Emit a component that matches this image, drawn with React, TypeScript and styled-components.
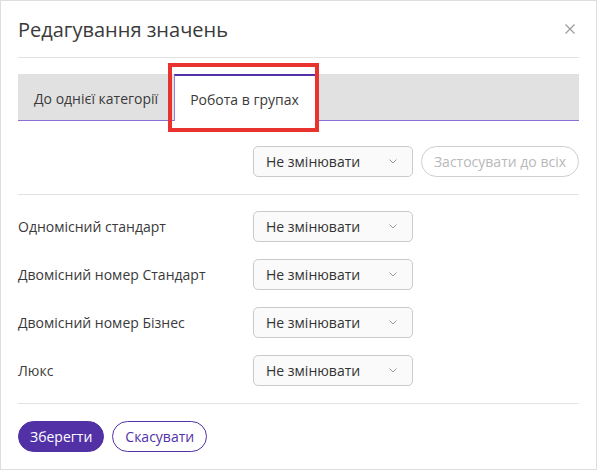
import React from 'react';
import styled, { createGlobalStyle } from 'styled-components';

const GlobalStyle = createGlobalStyle`
  html, body {
    margin: 0;
    padding: 0;
    background: #ffffff;
  }
  body {
    font-family: 'Open Sans', 'Noto Sans', sans-serif;
    color: #3a3a3a;
  }
  * {
    box-sizing: border-box;
  }
`;

const PURPLE = '#5231a7';

const Modal = styled.div`
  width: 597px;
  height: 470px;
  border: 1px solid #dedede;
  padding: 0 17px;
  display: flex;
  flex-direction: column;
  background: #fff;
`;

const Header = styled.header`
  height: 57px;
  border-bottom: 1px solid #e2e2e2;
  display: flex;
  align-items: center;
  justify-content: space-between;
`;

const Title = styled.h1`
  margin: 0;
  font-size: 20px;
  font-weight: 400;
  color: #3a3a3a;
`;

const CloseButton = styled.button`
  border: none;
  background: none;
  padding: 0;
  margin-right: 4px;
  width: 10px;
  height: 10px;
  display: flex;
  cursor: pointer;
`;

const TabBar = styled.nav`
  margin-top: 16px;
  height: 47px;
  background: #e1e1e1;
  border-bottom: 1px solid #8c6fd4;
  display: flex;
  align-items: flex-start;
`;

const Tab = styled.div<{ $active?: boolean }>`
  position: relative;
  height: 47px;
  padding: 1px 16px 0 ${(p) => (p.$active ? '15px' : '16px')};
  display: flex;
  align-items: center;
  font-size: 14px;
  color: #3a3a3a;
  white-space: nowrap;
  background: ${(p) => (p.$active ? '#ffffff' : 'transparent')};
  border-top: ${(p) => (p.$active ? `2px solid ${PURPLE}` : 'none')};
  border-left: ${(p) => (p.$active ? '1px solid #9a80da' : 'none')};
  border-right: ${(p) => (p.$active ? '1px solid #9a80da' : 'none')};
`;

const Highlight = styled.span`
  position: absolute;
  top: -13px;
  left: -7px;
  width: 151px;
  height: 69px;
  border: 4px solid #e8332e;
  pointer-events: none;
`;

const Row = styled.div<{ $gap?: number }>`
  display: grid;
  grid-template-columns: 235px 160px auto;
  align-items: center;
  height: 31px;
  margin-top: ${(p) => p.$gap ?? 17}px;
`;

const Label = styled.span`
  font-size: 14px;
  color: #3a3a3a;
`;

const SelectBox = styled.div`
  height: 31px;
  width: 160px;
  border: 1px solid #cacaca;
  border-radius: 5px;
  background: #fafafa;
  padding: 0 15px 0 12px;
  display: flex;
  align-items: center;
  justify-content: space-between;
  font-size: 14px;
  color: #333;
`;

const GhostButton = styled.button`
  justify-self: end;
  height: 31px;
  padding: 0 12px;
  border: 1px solid #cfcfcf;
  border-radius: 16px;
  background: #fff;
  font-family: inherit;
  font-size: 14px;
  color: #b9b9b9;
`;

const Divider = styled.hr<{ $top: number }>`
  border: none;
  height: 1px;
  background: #e2e2e2;
  margin: ${(p) => p.$top}px 0 0;
`;

const Footer = styled.div`
  margin-top: 17px;
  display: flex;
  gap: 8px;
`;

const Button = styled.button<{ $primary?: boolean }>`
  height: 31px;
  padding: 0 ${(p) => (p.$primary ? 11 : 12)}px;
  border-radius: 16px;
  font-family: inherit;
  font-size: 14px;
  border: 1px solid ${PURPLE};
  background: ${(p) => (p.$primary ? PURPLE : '#fff')};
  color: ${(p) => (p.$primary ? '#fff' : PURPLE)};
`;

const Chevron = () => (
  <svg width="8" height="5" viewBox="0 0 8 5">
    <path d="M0.5 0.5 L4 4 L7.5 0.5" fill="none" stroke="#9a9a9a" strokeWidth="1" />
  </svg>
);

const Select = () => (
  <SelectBox>
    <span>Не змінювати</span>
    <Chevron />
  </SelectBox>
);

const rooms = [
  'Одномісний стандарт',
  'Двомісний номер Стандарт',
  'Двомісний номер Бізнес',
  'Люкс',
];

export default function App() {
  return (
    <>
      <GlobalStyle />
      <Modal>
        <Header>
          <Title>Редагування значень</Title>
          <CloseButton aria-label="close">
            <svg width="10" height="10" viewBox="0 0 10 10">
              <path d="M0.5 0.5 L9.5 9.5 M9.5 0.5 L0.5 9.5" stroke="#9b9b9b" strokeWidth="1.2" />
            </svg>
          </CloseButton>
        </Header>
        <TabBar>
          <Tab>До однієї категорії</Tab>
          <Tab $active>
            Робота в групах
            <Highlight />
          </Tab>
        </TabBar>
        <Row $gap={25}>
          <span />
          <Select />
          <GhostButton>Застосувати до всіх</GhostButton>
        </Row>
        <Divider $top={17} />
        {rooms.map((room, index) => (
          <Row key={room} $gap={index === 0 ? 16 : 17}>
            <Label>{room}</Label>
            <Select />
          </Row>
        ))}
        <Divider $top={17} />
        <Footer>
          <Button $primary>Зберегти</Button>
          <Button>Скасувати</Button>
        </Footer>
      </Modal>
    </>
  );
}
